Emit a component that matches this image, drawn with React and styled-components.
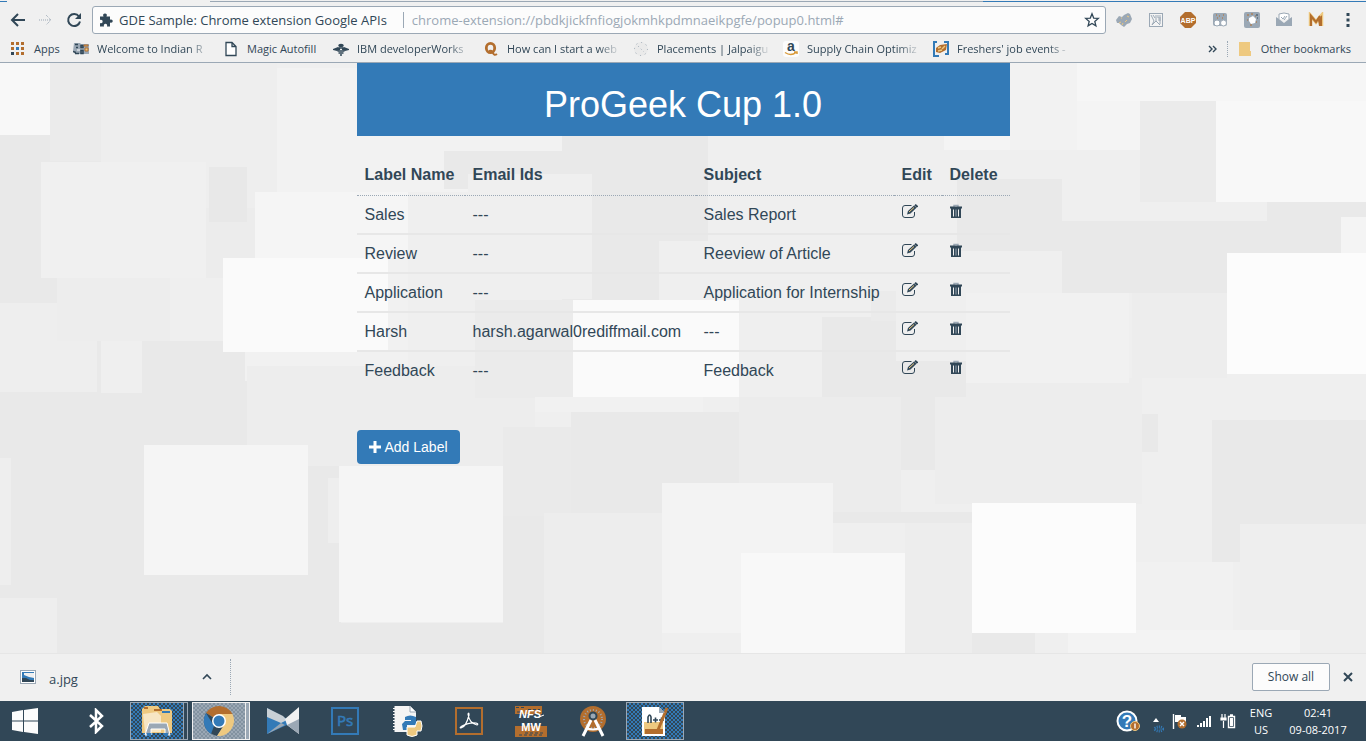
import React from "react";
import styled, { createGlobalStyle } from "styled-components";

const ink = "#314757";
const blue = "#337ab7";
const orange = "#b36e2e";
const gold = "#eec980";
const steel = "#9ba8b5";
const chromeBg = "#f0f0f0";

const uiFont = `"Open Sans", "Noto Sans", sans-serif`;
const pageFont = `"Liberation Sans", Arial, sans-serif`;

const GlobalStyle = createGlobalStyle`
  * { box-sizing: border-box; }
  body { margin: 0; background: ${chromeBg}; color: ${ink}; }
  button, input { font: inherit; color: inherit; }
  svg { display: block; flex: none; }
`;

const Screen = styled.div`
  display: flex;
  flex-direction: column;
  min-height: 100vh;
  font-family: ${uiFont};
`;

/* ---------- browser header ---------- */

const BrowserHeader = styled.header`
  background: ${chromeBg};
  border-bottom: 1px solid ${steel};
`;

const TabEdge = styled.div`
  display: flex;
  height: 2px;
`;

const EdgePart = styled.div`
  flex: ${(p) => p.$grow || 0} 0 ${(p) => p.$width || 0}px;
  border-bottom: ${(p) => (p.$color ? `1px solid ${p.$color}` : "none")};
`;

const Toolbar = styled.div`
  display: flex;
  align-items: center;
  gap: 12px;
  padding: 4px 10px 1px;
`;

const PlainButton = styled.button`
  display: flex;
  align-items: center;
  justify-content: center;
  padding: 0;
  border: 0;
  background: none;
  flex: none;
`;

const Omnibox = styled.div`
  display: flex;
  align-items: center;
  flex: 1;
  height: 28px;
  min-width: 0;
  margin-left: -2px;
  padding: 0 5px 0 6px;
  background: #fcfcfc;
  border: 1px solid ${steel};
  border-radius: 3px;
`;

const SiteName = styled.span`
  padding: 0 16px 0 6px;
  border-right: 1px solid ${steel};
  font-size: 13px;
  line-height: 16px;
  white-space: nowrap;
`;

const UrlInput = styled.input`
  flex: 1;
  min-width: 0;
  padding: 0 8px;
  border: 0;
  outline: 0;
  background: none;
  color: ${steel};
  font-size: 13px;
  line-height: 20px;
`;

const Extensions = styled.div`
  display: flex;
  align-items: center;
  gap: 16px;
  margin-left: -2px;
`;

const BookmarkBar = styled.nav`
  display: flex;
  align-items: center;
  gap: 12px;
  height: 27px;
  padding: 0 15px 0 10px;
  font-size: 11px;
  line-height: 18px;
`;

const Bookmark = styled.a`
  display: flex;
  align-items: center;
  gap: 8px;
  color: inherit;
  text-decoration: none;
  white-space: nowrap;
`;

const BookmarkText = styled.span`
  width: ${(p) => (p.$width ? `${p.$width}px` : "auto")};
  mask-image: ${(p) => (p.$fade ? "linear-gradient(to right, #000 80%, transparent)" : "none")};
`;

const BookmarkEnd = styled.div`
  display: flex;
  align-items: center;
  gap: 9px;
  margin-left: auto;
`;

const Divider = styled.span`
  height: ${(p) => p.$height}px;
  margin-left: ${(p) => p.$before || 0}px;
  border-left: 1px dotted ${steel};
`;

/* ---------- page ---------- */

const Page = styled.main`
  position: relative;
  flex: 1;
  overflow: hidden;
  font-family: ${pageFont};
  isolation: isolate;
`;

const Wallpaper = styled.svg`
  position: absolute;
  inset: 0;
  width: 100%;
  height: 100%;
  z-index: -1;
`;

const Container = styled.div`
  width: 100%;
  max-width: 653px;
  margin: 0 auto;
  padding-bottom: 40px;
`;

const Banner = styled.h1`
  margin: 0 0 20px;
  padding: 22px 16px 11px;
  background: ${blue};
  color: #fff;
  font-size: 36px;
  font-weight: 400;
  line-height: 40px;
  text-align: center;
`;

const LabelTable = styled.table`
  width: 100%;
  margin-bottom: 39px;
  border-collapse: separate;
  border-spacing: 0;
  table-layout: fixed;
  font-size: 16px;
  line-height: 22px;
`;

const HeadCell = styled.th`
  width: ${(p) => p.$width};
  padding: 8px 8px 9px;
  border-bottom: 1px dotted ${steel};
  text-align: left;
  white-space: nowrap;
`;

const Cell = styled.td`
  padding: 8px 8px 7px;
  white-space: nowrap;
  vertical-align: top;
  border-bottom: 2px solid #e7e7e7;
  tr:last-child & { border-bottom-color: transparent; }
`;

const AddButton = styled.button`
  display: flex;
  align-items: center;
  gap: 4px;
  height: 34px;
  padding: 0 12px;
  border: 0;
  border-radius: 4px;
  background: ${blue};
  color: #fff;
  font-size: 14px;
`;

/* ---------- download shelf ---------- */

const Shelf = styled.section`
  display: flex;
  align-items: center;
  height: 48px;
  padding: 0 12px 2px 20px;
  background: ${chromeBg};
  border-top: 1px solid #e6e6e6;
`;

const Download = styled.button`
  display: flex;
  align-items: center;
  gap: 13px;
  width: 192px;
  padding: 0;
  border: 0;
  background: none;
  font-size: 13px;
  text-align: left;
  & span { flex: 1; padding-top: 4px; }
`;

const ShelfEnd = styled.div`
  display: flex;
  align-items: center;
  gap: 12px;
  margin-left: auto;
`;

const ShowAll = styled.button`
  width: 78px;
  height: 28px;
  padding: 0;
  border: 1px solid ${steel};
  border-radius: 2px;
  background: #fcfcfc;
  font-size: 12px;
`;

/* ---------- taskbar ---------- */

const Taskbar = styled.footer`
  display: flex;
  align-items: center;
  height: 40px;
  padding: 0 16px 0 0;
  background: ${ink};
  color: #fff;
`;

const backdrops = {
  none: "none",
  blue: `repeating-conic-gradient(${blue} 0 25%, ${ink} 0 50%) 0 0 / 4px 4px`,
  steel: `repeating-conic-gradient(${steel} 0 25%, #8292a0 0 50%) 0 0 / 4px 4px`,
};

const TaskButton = styled.button`
  display: flex;
  align-items: center;
  justify-content: center;
  flex: none;
  width: ${(p) => p.$width || 62}px;
  height: 38px;
  padding: 0;
  border: ${(p) => (p.$edge ? `1px solid ${p.$edge}` : "0")};
  background: ${(p) => backdrops[p.$backdrop || "none"]};
  margin: 0 ${(p) => p.$after || 0}px 0 ${(p) => p.$before || 0}px;
`;

const StackEdge = styled.span`
  width: 4px;
  height: 38px;
  margin-right: ${(p) => p.$after}px;
  border: 1px solid ${(p) => p.$edge};
  border-left: 0;
  background: ${(p) => p.$fill};
`;

const Tray = styled.div`
  display: flex;
  align-items: center;
  gap: 8px;
  margin-left: auto;
`;

const TrayText = styled.div`
  width: ${(p) => p.$width}px;
  font-size: 11px;
  line-height: 17px;
  text-align: center;
  white-space: nowrap;
`;

/* ---------- wallpaper tiles: x, y, width, height, fill ---------- */

const tiles = [
  [0, 72, 101, 518, "#e9e9e9"],
  [50, 0, 51, 98, "#ebebeb"],
  [0, 0, 50, 72, "#f8f8f8"],
  [101, 0, 176, 145, "#eeeeee"],
  [277, 5, 285, 124, "#f2f2f2"],
  [444, 88, 150, 38, "#e9e9e9"],
  [206, 145, 50, 70, "#ececec"],
  [41, 99, 165, 116, "#f0f0f0"],
  [209, 104, 38, 55, "#e8e8e8"],
  [0, 240, 97, 89, "#eeeeee"],
  [57, 215, 113, 63, "#ededed"],
  [142, 278, 105, 104, "#e9e9e9"],
  [39, 330, 208, 52, "#e9e9e9"],
  [101, 382, 240, 210, "#e9e9e9"],
  [255, 129, 164, 180, "#f5f5f5"],
  [245, 195, 163, 123, "#f1f1f1"],
  [223, 195, 165, 94, "#fafafa"],
  [408, 129, 60, 190, "#efefef"],
  [562, 73, 146, 165, "#e9e9e9"],
  [468, 111, 124, 125, "#efefef"],
  [592, 178, 67, 60, "#e9e9e9"],
  [659, 178, 60, 60, "#efefef"],
  [247, 303, 288, 100, "#ededed"],
  [475, 237, 98, 98, "#ebebeb"],
  [573, 237, 166, 97, "#fafafa"],
  [535, 334, 168, 15, "#f1f1f1"],
  [503, 364, 68, 90, "#eaeaea"],
  [571, 349, 168, 104, "#e9e9e9"],
  [503, 453, 41, 137, "#e9e9e9"],
  [341, 560, 204, 30, "#e9e9e9"],
  [144, 382, 164, 130, "#f5f5f5"],
  [328, 415, 11, 65, "#eeeeee"],
  [339, 403, 164, 156, "#f5f5f5"],
  [544, 450, 118, 140, "#ededed"],
  [0, 395, 11, 127, "#eeeeee"],
  [0, 535, 57, 55, "#eeeeee"],
  [739, 334, 162, 115, "#ececec"],
  [833, 449, 139, 11, "#e9e9e9"],
  [905, 460, 67, 130, "#ededed"],
  [662, 420, 171, 150, "#f3f3f3"],
  [741, 490, 164, 100, "#f8f8f8"],
  [822, 254, 74, 80, "#e9e9e9"],
  [871, 228, 25, 30, "#ebebeb"],
  [901, 334, 34, 73, "#e9e9e9"],
  [935, 315, 207, 126, "#ededed"],
  [896, 298, 70, 36, "#e9e9e9"],
  [944, 0, 196, 87, "#f4f4f4"],
  [1010, 0, 67, 87, "#f2f2f2"],
  [1077, 0, 289, 38, "#f6f6f6"],
  [1140, 38, 76, 101, "#ebebeb"],
  [957, 116, 105, 72, "#e9e9e9"],
  [1062, 158, 279, 72, "#e9e9e9"],
  [1106, 87, 34, 71, "#efefef"],
  [1140, 139, 127, 19, "#efefef"],
  [1216, 38, 150, 101, "#f8f8f8"],
  [1267, 139, 99, 20, "#e9e9e9"],
  [1341, 154, 25, 36, "#f4f4f4"],
  [966, 230, 163, 90, "#f1f1f1"],
  [1132, 230, 95, 85, "#ededed"],
  [1227, 190, 139, 121, "#fcfcfc"],
  [1142, 351, 16, 38, "#e9e9e9"],
  [1212, 357, 154, 104, "#e9e9e9"],
  [1212, 441, 28, 58, "#e9e9e9"],
  [1240, 461, 126, 129, "#eeeeee"],
  [1136, 499, 97, 91, "#f1f1f1"],
  [1068, 567, 232, 23, "#f3f3f3"],
  [972, 570, 63, 20, "#e9e9e9"],
  [972, 440, 164, 130, "#fcfcfc"],
];

const Background = () => (
  <Wallpaper viewBox="0 0 1366 590" preserveAspectRatio="xMidYMin slice" aria-hidden="true">
    <rect width="1366" height="590" fill="#efefef" />
    {tiles.map(([x, y, w, h, fill]) => (
      <rect key={`${x}-${y}-${w}`} x={x} y={y} width={w} height={h} fill={fill} />
    ))}
  </Wallpaper>
);

/* ---------- icons ---------- */

const Icon = ({ w = 16, h = w, box, children }) => (
  <svg width={w} height={h} viewBox={box || `0 0 ${w} ${h}`} aria-hidden="true">
    {children}
  </svg>
);

const BackIcon = () => (
  <Icon>
    <path d="M15 8H2M8 2L2 8l6 6" fill="none" stroke={ink} strokeWidth="2" />
  </Icon>
);
const ForwardIcon = () => (
  <Icon>
    <path d="M1 8h12M8 3l5 5-5 5" fill="none" stroke={steel} strokeWidth="1" strokeDasharray="1 1" />
  </Icon>
);
const ReloadIcon = () => (
  <Icon>
    <path d="M13 4.5A6 6 0 1 0 14 9.500" fill="none" stroke={ink} strokeWidth="2" />
    <path d="M15 1v6H9z" fill={ink} />
  </Icon>
);
const PuzzleIcon = () => (
  <Icon w={14}>
    <path d="M1 3.500h3.500C3.500 1.500 4.500 .5 6 .5s2.500 1 1.500 3H11v3.200c1.600-.8 2.700 0 2.700 1.400S12.600 10.300 11 9.500v4H8c.6-2-.3-2.800-1.500-2.800S4.400 11.500 5 13.500H1v-3.500c1.800.6 2.600-.2 2.600-1.400S2.800 6.400 1 7z" fill={ink} />
  </Icon>
);
const StarIcon = () => (
  <Icon>
    <path d="M8 1.800l1.700 4.300 4.600.3-3.500 3 1.100 4.500L8 11.400l-3.900 2.500 1.100-4.500-3.500-3 4.600-.3z" fill="none" stroke={ink} strokeWidth="1.300" />
  </Icon>
);
const MapExt = () => (
  <Icon>
    <path d="M0 8l3-4 3 1 2-2 4-2 2 1 2 5-2 4-3 1-3 3-3-2-2-2H1z" fill={steel} />
    <path d="M3 11l2-1M6 13l1-2M9 10l2-2M11 4l2 1M5 6h1" stroke={gold} strokeWidth="1" />
  </Icon>
);
const FrameExt = () => (
  <Icon>
    <rect x="1.500" y="1.500" width="13" height="13" fill="#f4f4f4" stroke={steel} />
    <path d="M3 3l3 6-2 4M8 3v6l-4 4M8 9l4 4M10 3v3h3M10 8h3M5 3l2 3M12 3v9" fill="none" stroke={steel} />
  </Icon>
);
const AbpExt = () => (
  <Icon>
    <path d="M5 0h6l5 5v6l-5 5H5l-5-5V5z" fill={orange} />
    <text x="8" y="10.500" fontSize="7" fontWeight="700" fill="#fff" textAnchor="middle" fontFamily="Liberation Sans, sans-serif">ABP</text>
  </Icon>
);
const OwlExt = () => (
  <Icon>
    <rect x="1" y="1" width="14" height="13" rx="2" fill={steel} />
    <path d="M4 3h1M7 4h1M11 3h1M5 6h1M10 6h1" stroke={orange} />
    <circle cx="5" cy="11" r="3" fill="#fff" stroke={steel} />
    <circle cx="11.500" cy="11" r="3" fill="#fff" stroke={steel} />
  </Icon>
);
const ShotExt = () => (
  <Icon>
    <rect width="16" height="16" rx="2" fill={steel} />
    <path d="M3 3h2M7 2h2M3 8h1M12 10h1M6 13h2M11 4h1" stroke={orange} />
    <path d="M12 3h2M13 6h1" stroke={ink} />
    <path d="M5 6l4-2 3 3-1 4-4 1-2-3z" fill="#fff" />
  </Icon>
);
const MailExt = () => (
  <Icon>
    <path d="M3 7V2l5-1 5 1v5" fill="#fff" stroke={steel} />
    <path d="M0 5l3 2 5 4 5-4 3-2v9H0z" fill={steel} />
    <path d="M5 5l2 2 2-3M8 8l3-4" fill="none" stroke={steel} />
  </Icon>
);
const MExt = () => (
  <Icon>
    <path d="M2.500 14V3.500L8 10l5.500-6.500V14" fill="none" stroke={gold} strokeWidth="3.500" />
    <path d="M3 14V4l5 6 4-6" fill="none" stroke={orange} strokeWidth="2.200" />
    <path d="M10 8l4-5v11h-3z" fill={orange} />
  </Icon>
);
const MenuIcon = () => (
  <Icon>
    <path d="M6.500 1h3v3h-3zM6.500 6.500h3v3h-3zM6.500 12h3v3h-3z" fill={ink} />
  </Icon>
);

const AppsIcon = () => (
  <Icon>
    {[0, 5, 10].map((y, r) =>
      [1, 6, 11].map((x, c) => (
        <rect key={`${x}-${y}`} x={x} y={y + 1} width="3" height="3" fill={r === 1 && c === 1 ? blue : r === 2 && c === 0 ? ink : orange} />
      ))
    )}
  </Icon>
);
const TrainIcon = () => (
  <Icon>
    <path d="M1 2h6l1 1h8v10H2l-2-3z" fill={steel} />
    <path d="M2 3.500h3M3 6.500h2M8 4.500h2v2H8zM8 9.500h2v3H8zM2 12.500h4M0 10.500l3 1" fill="none" stroke={ink} strokeWidth="1.500" />
    <path d="M11 4h4v1h-4zM12 7h3v3h-3z" fill={gold} stroke={orange} />
    <path d="M4 9h3" stroke="#fff" />
  </Icon>
);
const FileIcon = () => (
  <Icon>
    <path d="M3 1.500h6l4 4v9H3zM9 1.500v4h4" fill="#fff" stroke={ink} strokeWidth="1.300" />
  </Icon>
);
const BeeIcon = () => (
  <Icon>
    <ellipse cx="8" cy="4.500" rx="2.800" ry="1.800" fill={ink} />
    <path d="M0 8l5-2 2 1v2l-3 1-4-1zM16 8l-5-2-2 1v2l3 1 4-1z" fill={ink} />
    <path d="M4.500 10h7M5.500 12h5M7 14h2M6 7h4" stroke={ink} strokeWidth="1.300" />
  </Icon>
);
const QuoraIcon = () => (
  <Icon>
    <ellipse cx="7.500" cy="7" rx="4.200" ry="4.700" fill="none" stroke={orange} strokeWidth="2.800" />
    <path d="M6 10q3-1 4 2t4 1" fill="none" stroke={orange} strokeWidth="2" />
  </Icon>
);
const SealIcon = () => (
  <Icon>
    <circle cx="8" cy="8" r="7" fill="#eaeaea" />
    <circle cx="8" cy="8" r="6.500" fill="none" stroke={steel} strokeDasharray="1 4" />
    <path d="M5 5l6 6" stroke={steel} strokeDasharray="1 3" />
  </Icon>
);
const AmazonIcon = () => (
  <Icon>
    <rect width="16" height="16" rx="3" fill="#fcfcfc" />
    <text x="8" y="10" fontSize="14" fontWeight="700" fill={ink} textAnchor="middle" fontFamily="Liberation Sans, sans-serif">a</text>
    <path d="M2 11.500q6 4 11 0M11 11h3v2" fill="none" stroke="#d99a3a" strokeWidth="1.500" />
  </Icon>
);
const JobsIcon = () => (
  <Icon>
    <path d="M4 1H1v14h5M11 1h4v12h-3" fill="none" stroke={blue} strokeWidth="2" />
    <path d="M3 7l4-3 7-1-1 6-6 3-4-1z" fill={orange} />
    <path d="M5 7l3-1M9 8l3-3M5 10l4-1" stroke={gold} strokeWidth="1.400" />
  </Icon>
);
const FolderIcon = () => (
  <Icon>
    <path d="M2 1h11v9h1v5H2z" fill={gold} />
  </Icon>
);

const EditIcon = () => (
  <Icon>
    <path d="M9.500 1.500H3A2.500 2.500 0 0 0 .5 4v7A2.500 2.500 0 0 0 3 13.500h7a2.500 2.500 0 0 0 2.500-2.500V8" fill="none" stroke={ink} />
    <path d="M5 10.500l1-3.500 6-5.500 2.500 2.300-6 5.700z" fill={ink} />
    <path d="M13 .7l2.500 2.300" stroke={ink} strokeWidth="2" />
    <path d="M7 8l5-4.500" stroke={gold} strokeWidth="1" />
  </Icon>
);
const TrashIcon = () => (
  <Icon w={12} h={16}>
    <path d="M4 3V1.500h4V3" fill="none" stroke={steel} strokeWidth="1.400" />
    <path d="M0 2.500h12v2H0zM1 4h10v10H1z" fill={ink} />
    <path d="M3.500 5.500v7M8.500 5.500v7" stroke="#efefef" />
    <path d="M6 5.500v7" stroke={steel} />
  </Icon>
);
const PlusIcon = () => (
  <Icon w={12}>
    <path d="M4.500 0h3v4.500H12v3H7.500V12h-3V7.500H0v-3h4.500z" fill="#fff" />
  </Icon>
);

const ImageIcon = () => (
  <Icon>
    <rect x="0.500" y="1.500" width="15" height="13" fill="#fff" stroke={steel} />
    <rect x="2" y="3" width="12" height="10" fill={blue} />
    <path d="M4 4h10v5L9 8 4 6z" fill="#f0f0f0" />
    <path d="M2 9l4 0 4 2 4 0v2H2z" fill={ink} />
  </Icon>
);
const ChevronUp = () => (
  <Icon w={10}>
    <path d="M1 7l4-4 4 4" fill="none" stroke={ink} strokeWidth="1.600" />
  </Icon>
);
const CloseIcon = () => (
  <Icon w={12}>
    <path d="M2 2l8 8M10 2l-8 8" stroke={ink} strokeWidth="2" />
  </Icon>
);

const WindowsIcon = () => (
  <Icon w={28}>
    <path d="M1 5l11-2v10.500H1zM13 3l14-2v12.500H13zM1 14.500h11V25L1 23zM13 14.500h14V27l-14-2z" fill="#fcfcfc" />
  </Icon>
);
const BluetoothIcon = () => (
  <Icon w={16} h={26}>
    <path d="M2 7l12 11-6 6V2l6 6L2 19" fill="none" stroke="#fff" strokeWidth="2.500" />
  </Icon>
);
const ExplorerIcon = () => (
  <Icon w={34} h={32}>
    <path d="M2 4l3-3h13l2 3h10l2 2v22H2z" fill={gold} />
    <path d="M14 4h8v2h-8zM4 2h4v2H4z" fill={orange} />
    <path d="M22 6h8v2h-8z" fill={blue} />
    <path d="M3 9l14-2 4 4v16H5z" fill="#f7e6c4" />
    <path d="M5 30l4-12h18l3 12h-5v-6H11v6z" fill={steel} stroke="#fff" />
    <path d="M7 28h4v3H7zM24 28h4v3h-4z" fill={blue} />
  </Icon>
);
const ChromeIcon = () => (
  <Icon w={32}>
    <path d="M16 16L3 8A15.500 15.500 0 0 1 29.500 9H16z" fill={orange} />
    <path d="M16 16L3 8a15.500 15.500 0 0 0 11 23l6-9z" fill={ink} />
    <path d="M3 8a15.500 15.500 0 0 0 5 21l3-8z" fill={blue} />
    <path d="M16 9h13.500A15.500 15.500 0 0 1 14 31l7-11z" fill={gold} />
    <circle cx="16" cy="16" r="7" fill="#fff" />
    <circle cx="16" cy="16" r="5.500" fill={blue} />
  </Icon>
);
const ButterflyIcon = () => (
  <Icon w={32} h={28}>
    <path d="M0 1l20 11v6L0 27z" fill={blue} />
    <path d="M0 1l16 8 4 4-6 3L0 10z" fill="#c9d0d6" />
    <path d="M0 27l14-11 4 2z" fill={steel} />
    <path d="M32 0v27L20 18l-2-6z" fill="#f0f0f0" />
    <path d="M20 18l12 9V12z" fill={steel} />
  </Icon>
);
const PsIcon = () => (
  <Icon w={28}>
    <rect x="1" y="1" width="26" height="26" fill={ink} stroke={blue} strokeWidth="2" />
    <text x="14" y="19" fontSize="15" fill={blue} stroke={blue} strokeWidth="0.600" textAnchor="middle" fontFamily="Open Sans, sans-serif">Ps</text>
  </Icon>
);
const PythonIcon = () => (
  <Icon w={32}>
    <path d="M2 1h17l6 6v20H2z" fill="#f4f4f4" />
    <path d="M2.500 1v26" stroke={ink} strokeWidth="2" strokeDasharray="2 1" />
    <path d="M19 1v6h6" fill="#fff" stroke={steel} />
    <path d="M14 12q5-3 11 0v8H16v5h-4l-1-6 3-3h6v-1h-6z" fill={blue} />
    <path d="M26 16h4l1 5-1 5h-4v4q-5 3-10 0v-8h8z" fill={gold} stroke="#fff" />
  </Icon>
);
const AcrobatIcon = () => (
  <Icon w={28}>
    <rect x="1" y="1" width="26" height="26" fill={ink} stroke={orange} strokeWidth="2" />
    <path d="M6 21q5-1 8-13 0-3-1-1 1 9 9 11 2-1-1-2-6-1-14 3-3 2-1 2z" fill="none" stroke="#fff" strokeWidth="1.200" />
  </Icon>
);
const NfsIcon = () => (
  <Icon w={32}>
    <path d="M0 1h27v8H0zM0 21h32v11H0z" fill={orange} />
    <path d="M1 2.500h8M13 4.500h12M2 7h6M4 30h24M10 28h18" stroke={ink} strokeDasharray="3 2" />
    <path d="M24 12l5-2" stroke="#fff" />
    <text x="15" y="13" fontSize="11" fontStyle="italic" fontWeight="700" fill="#fff" textAnchor="middle" fontFamily="Liberation Sans, sans-serif">NFS</text>
    <text x="16" y="26" fontSize="11" fontWeight="700" fill="#fff" textAnchor="middle" fontFamily="Liberation Sans, sans-serif">MW</text>
  </Icon>
);
const AndroidStudioIcon = () => (
  <Icon w={28} h={32}>
    <circle cx="14" cy="14" r="13" fill={orange} />
    <circle cx="14" cy="14" r="9" fill="none" stroke={steel} strokeWidth="2" strokeDasharray="1 2" />
    <circle cx="14" cy="11" r="3.500" fill={steel} stroke={ink} strokeWidth="2" />
    <path d="M12 15L4 31M16 15l8 16" fill="none" stroke="#fff" strokeWidth="3" />
    <path d="M7 23q7 3 14 0" fill="none" stroke="#fff" strokeWidth="2" />
  </Icon>
);
const NotepadIcon = () => (
  <Icon w={30} h={32}>
    <path d="M2 2h17l6 6v23H2z" fill="#fff" />
    <path d="M4 17h19v12H4z" fill={gold} />
    <path d="M5 24h18v5H5z" fill={orange} />
    <path d="M8 18v-6q2-4 3 0v6M13 15h5M15.500 12.500v5M19 15h5M21.500 12.500v5" fill="none" stroke={ink} strokeWidth="1.600" />
    <path d="M27 3L18 25" stroke={orange} strokeWidth="3" />
    <path d="M19 2l6 6h-6z" fill={steel} />
  </Icon>
);

const HelpIcon = () => (
  <Icon w={24}>
    <circle cx="11" cy="12" r="9.500" fill={blue} stroke="#fff" strokeWidth="2" />
    <text x="11" y="18" fontSize="17" fontWeight="700" fill="#fff" textAnchor="middle" fontFamily="Liberation Sans, sans-serif">?</text>
    <circle cx="19" cy="17" r="4.500" fill={orange} stroke={gold} />
    <path d="M19 14.500v5" stroke="#fff" strokeWidth="1.400" />
  </Icon>
);
const TrayArrow = () => (
  <Icon w={16} h={24}>
    <path d="M5 13l3-4 3 4z" fill="#fff" />
    <ellipse cx="11" cy="20" rx="4" ry="2" fill="none" stroke={blue} strokeWidth="3" strokeDasharray="1 1" />
  </Icon>
);
const FlagIcon = () => (
  <Icon>
    <path d="M1.500 1v15" stroke="#fff" strokeWidth="1.400" />
    <path d="M3 2h6v2h5v5H3z" fill="#fff" />
    <circle cx="10" cy="11" r="4.500" fill={orange} />
    <path d="M8 9l4 4M12 9l-4 4" stroke="#fff" strokeWidth="1.400" />
  </Icon>
);
const SignalIcon = () => (
  <Icon>
    <path d="M1 12h2v2H1zM4 10h2v4H4zM7 8h2v6H7zM10 5h2v9h-2zM13 3h2v11h-2z" fill="#fff" />
  </Icon>
);
const BatteryIcon = () => (
  <Icon>
    <path d="M2 1v4M5 1v4M1 5h5v2H1zM3.500 8v7" fill="#fff" stroke="#fff" strokeWidth="1.200" />
    <path d="M8.500 3.500h6v11h-6zM10 2h3" fill="none" stroke="#fff" strokeWidth="1.400" />
    <rect x="10" y="5" width="3" height="8" fill="#fff" />
  </Icon>
);

/* ---------- data ---------- */

const bookmarks = [
  { text: "Apps", icon: AppsIcon, width: 27 },
  { text: "Welcome to Indian R", icon: TrainIcon, width: 114, fade: true },
  { text: "Magic Autofill", icon: FileIcon, width: 74 },
  { text: "IBM developerWorks", icon: BeeIcon, width: 114, fade: true },
  { text: "How can I start a web", icon: QuoraIcon, width: 114, fade: true },
  { text: "Placements | Jalpaigu", icon: SealIcon, width: 114, fade: true },
  { text: "Supply Chain Optimiz", icon: AmazonIcon, width: 114, fade: true },
  { text: "Freshers' job events -", icon: JobsIcon, width: 114, fade: true },
];

const extensions = [
  ["Map", MapExt],
  ["Frame", FrameExt],
  ["Ad blocker", AbpExt],
  ["Viewer", OwlExt],
  ["Capture", ShotExt],
  ["Mail tracker", MailExt],
  ["Mail", MExt],
  ["Menu", MenuIcon],
];

const labels = [
  ["Sales", "---", "Sales Report"],
  ["Review", "---", "Reeview of Article"],
  ["Application", "---", "Application for Internship"],
  ["Harsh", "harsh.agarwal0rediffmail.com", "---"],
  ["Feedback", "---", "Feedback"],
];

const pinned = [
  ["Player", ButterflyIcon],
  ["Photoshop", PsIcon],
  ["Python", PythonIcon],
  ["Acrobat", AcrobatIcon],
  ["Most Wanted", NfsIcon],
  ["Android Studio", AndroidStudioIcon],
];

export default function App() {
  return (
    <Screen>
      <GlobalStyle />
      <BrowserHeader>
        <TabEdge>
          <EdgePart $width={7} $color={blue} />
          <EdgePart $width={203} />
          <EdgePart $grow={2} $color={steel} />
          <EdgePart $width={383} $color={blue} />
        </TabEdge>
        <Toolbar>
          <PlainButton aria-label="Back"><BackIcon /></PlainButton>
          <PlainButton aria-label="Forward"><ForwardIcon /></PlainButton>
          <PlainButton aria-label="Reload"><ReloadIcon /></PlainButton>
          <Omnibox>
            <PuzzleIcon />
            <SiteName>GDE Sample: Chrome extension Google APIs</SiteName>
            <UrlInput
              aria-label="Address"
              defaultValue="chrome-extension://pbdkjickfnfiogjokmhkpdmnaeikpgfe/popup0.html#"
            />
            <PlainButton aria-label="Bookmark this page"><StarIcon /></PlainButton>
          </Omnibox>
          <Extensions>
            {extensions.map(([name, Glyph]) => (
              <PlainButton key={name} aria-label={name}><Glyph /></PlainButton>
            ))}
          </Extensions>
        </Toolbar>
        <BookmarkBar aria-label="Bookmarks">
          {bookmarks.map(({ text, icon: Glyph, width, fade }) => (
            <Bookmark href="#" key={text}>
              <Glyph />
              <BookmarkText $width={width} $fade={fade}>{text}</BookmarkText>
            </Bookmark>
          ))}
          <BookmarkEnd>
            <PlainButton aria-label="More bookmarks">
              <Icon w={10}>
                <path d="M1 2l3 3-3 3M5 2l3 3-3 3" fill="none" stroke={ink} strokeWidth="1.400" />
              </Icon>
            </PlainButton>
            <Divider $height={16} />
            <Bookmark href="#">
              <FolderIcon />
              <BookmarkText>Other bookmarks</BookmarkText>
            </Bookmark>
          </BookmarkEnd>
        </BookmarkBar>
      </BrowserHeader>

      <Page>
        <Background />
        <Container>
          <Banner>ProGeek Cup 1.0</Banner>
          <LabelTable>
            <thead>
              <tr>
                <HeadCell $width="108px">Label Name</HeadCell>
                <HeadCell $width="231px">Email Ids</HeadCell>
                <HeadCell $width="198px">Subject</HeadCell>
                <HeadCell $width="48px">Edit</HeadCell>
                <HeadCell $width="68px">Delete</HeadCell>
              </tr>
            </thead>
            <tbody>
              {labels.map(([name, email, subject]) => (
                <tr key={name}>
                  <Cell>{name}</Cell>
                  <Cell>{email}</Cell>
                  <Cell>{subject}</Cell>
                  <Cell><PlainButton aria-label={`Edit ${name}`}><EditIcon /></PlainButton></Cell>
                  <Cell><PlainButton aria-label={`Delete ${name}`}><TrashIcon /></PlainButton></Cell>
                </tr>
              ))}
            </tbody>
          </LabelTable>
          <AddButton><PlusIcon />Add Label</AddButton>
        </Container>
      </Page>

      <Shelf aria-label="Downloads">
        <Download>
          <ImageIcon />
          <span>a.jpg</span>
          <ChevronUp />
        </Download>
        <Divider $height={36} $before={18} />
        <ShelfEnd>
          <ShowAll>Show all</ShowAll>
          <PlainButton aria-label="Close"><CloseIcon /></PlainButton>
        </ShelfEnd>
      </Shelf>

      <Taskbar>
        <TaskButton aria-label="Start" $width={50} $after={16}><WindowsIcon /></TaskButton>
        <TaskButton aria-label="Bluetooth" $width={60} $after={4}><BluetoothIcon /></TaskButton>
        <TaskButton aria-label="File Explorer" $width={54} $backdrop="blue" $edge={steel}><ExplorerIcon /></TaskButton>
        <StackEdge $edge={steel} $fill={ink} $after={4} />
        <TaskButton aria-label="Chrome" $width={54} $backdrop="steel" $edge="#f0f0f0"><ChromeIcon /></TaskButton>
        <StackEdge $edge="#f0f0f0" $fill={steel} $after={2} />
        {pinned.map(([name, Glyph]) => (
          <TaskButton key={name} aria-label={name}><Glyph /></TaskButton>
        ))}
        <TaskButton aria-label="Notepad++" $width={58} $before={2} $backdrop="blue" $edge={steel}><NotepadIcon /></TaskButton>
        <Tray>
          <HelpIcon />
          <TrayArrow />
          <FlagIcon />
          <SignalIcon />
          <BatteryIcon />
          <TrayText $width={34}>ENG<br />US</TrayText>
          <TrayText $width={64}>02:41<br />09-08-2017</TrayText>
        </Tray>
      </Taskbar>
    </Screen>
  );
}
